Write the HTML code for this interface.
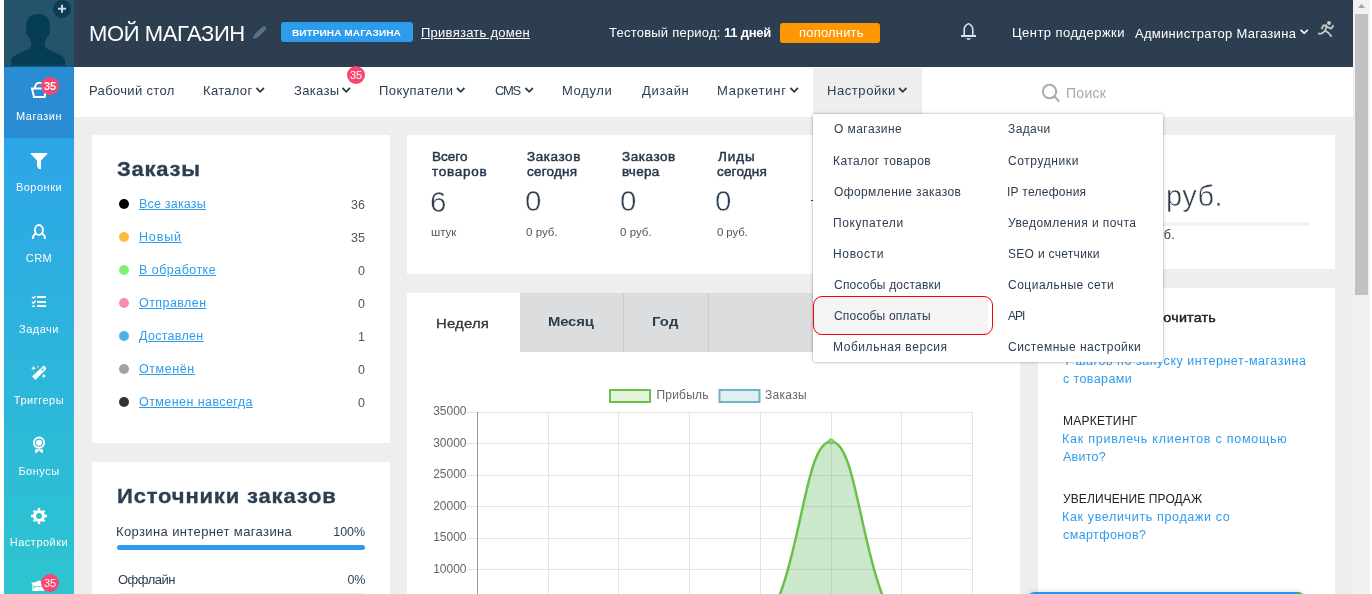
<!DOCTYPE html>
<html lang="ru">
<head>
<meta charset="utf-8">
<title>Мой магазин</title>
<style>
*{box-sizing:border-box;margin:0;padding:0}
html,body{width:1372px;height:594px;overflow:hidden;background:#fff}
body{font-family:"Liberation Sans",sans-serif;color:#2d3e50;font-size:14px;position:relative}
a{color:#2d9cec}
.a{position:absolute;white-space:nowrap;line-height:1}
#bg{position:absolute;left:4px;top:0;width:1349px;height:594px;background:#eeeeee}
#side{position:absolute;left:4px;top:0;width:70px;height:594px;background:linear-gradient(#2d9cee,#2dc5d0)}
#avatar{position:absolute;left:4px;top:0;width:70px;height:67px;background:#25536c;overflow:hidden}
.sl{position:absolute;left:4px;width:70px;text-align:center;color:#fff;font-size:11px;line-height:14px;letter-spacing:.5px}
.badge{position:absolute;background:#f9456f;color:#fff;border-radius:50%;text-align:center;font-size:11px;width:18px;height:18px;line-height:18px}
#hdr{position:absolute;left:74px;top:0;width:1279px;height:67px;background:#2d3e50}
#nav{position:absolute;left:74px;top:67px;width:1279px;height:50px;background:#fff}
.n{position:absolute;top:83px;font-size:13px;line-height:15px;color:#2d3e50;white-space:nowrap;letter-spacing:.2px}
.card{position:absolute;background:#fff}
.h{color:#fff}

.dot{position:absolute;left:119px;width:10px;height:10px;border-radius:50%}
.lk{left:139px;font-size:12.5px;line-height:16px;letter-spacing:.3px;text-decoration:underline;color:#2d9cec}
.num{left:320px;width:45px;text-align:right;font-size:12.5px;line-height:16px;color:#555;letter-spacing:0}
.st{font-size:12.5px;line-height:15px;font-weight:400;letter-spacing:.1px;color:#26374a;-webkit-text-stroke:.45px #26374a;transform:scaleX(1.08);transform-origin:0 0}
.big{top:185px;font-size:29.5px;line-height:32px;letter-spacing:0;-webkit-text-stroke:.5px #fff}
.sub{top:225px;font-size:11.5px;line-height:14px;color:#555;letter-spacing:-.3px}
.tab{font-size:13.5px;line-height:18px;color:#2d3e50;letter-spacing:-.2px;transform:scaleX(1.1);transform-origin:0 0}
.cat{left:1063px;font-size:12px;line-height:14px;color:#222;letter-spacing:0}
.rl{left:1063px;font-size:12.5px;line-height:18px;color:#2d9cec;letter-spacing:.4px;text-decoration:none}
.di{font-size:12px;line-height:15px;color:#2d3e50;letter-spacing:.4px}
</style>
</head>
<body>
<div id="wrap" style="position:absolute;left:0;top:0;width:1372px;height:594px;overflow:hidden;will-change:transform">
<div id="bg"></div>
<div id="side"></div>
<div id="avatar"></div>
<div class="a" id="sact" style="left:4px;top:67px;width:70px;height:71px;background:#2a8dd4"></div>
<div id="hdr"></div>
<div id="nav"></div>

<!-- HEADER -->
<div class="a h" id="t_title" style="left:89px;top:22px;font-size:22px;line-height:24px;letter-spacing:-0.4px">МОЙ МАГАЗИН</div>
<div class="a" id="b_vit" style="left:281px;top:22px;width:132px;height:20px;background:#2d9cec;border-radius:3px"></div>
<div class="a h" id="t_vit" style="left:292px;top:27px;font-size:9px;line-height:13px;transform:scaleX(1.12);transform-origin:0 0;font-weight:700;letter-spacing:0.04px">ВИТРИНА МАГАЗИНА</div>
<div class="a h" id="t_dom" style="left:421px;top:25px;font-size:13px;line-height:16px;letter-spacing:0.26px;text-decoration:underline">Привязать домен</div>
<div class="a h" id="t_test" style="left:609px;top:25px;font-size:13px;line-height:16px;letter-spacing:-.3px"><span style="letter-spacing:0.23px">Тестовый период:</span> <b style="letter-spacing:-0.23px">11 дней</b></div>
<div class="a" id="b_pop" style="left:780px;top:23px;width:100px;height:20px;background:#ff9800;border-radius:3px"></div>
<div class="a h" id="t_pop" style="left:799px;top:25px;font-size:13px;line-height:16px;letter-spacing:0.19px">пополнить</div>
<div class="a h" id="t_sup" style="left:1012px;top:25px;font-size:13px;line-height:16px;letter-spacing:0.46px">Центр поддержки</div>
<div class="a h" id="t_adm" style="left:1135px;top:26px;font-size:13px;line-height:16px;letter-spacing:0.29px">Администратор Магазина</div>

<!-- NAV -->
<div class="a" id="navact" style="left:813px;top:68px;width:109px;height:49px;background:#eeeeee"></div>
<div class="n" id="n1" style="left:89px;letter-spacing:0.34px">Рабочий стол</div>
<div class="n" id="n2" style="left:203px;letter-spacing:0.31px">Каталог</div>
<div class="n" id="n3" style="left:294px;letter-spacing:0.34px">Заказы</div>
<div class="n" id="n4" style="left:379px;letter-spacing:0.42px">Покупатели</div>
<div class="n" id="n5" style="left:495px;letter-spacing:-1.35px">CMS</div>
<div class="n" id="n6" style="left:562px;letter-spacing:0.64px">Модули</div>
<div class="n" id="n7" style="left:642px;letter-spacing:0.6px">Дизайн</div>
<div class="n" id="n8" style="left:717px;letter-spacing:0.71px">Маркетинг</div>
<div class="n" id="n9" style="left:827px;letter-spacing:0.57px">Настройки</div>
<div class="badge" id="nbadge" style="left:347px;top:66px">35</div>
<div class="a" id="t_search" style="left:1066px;top:84px;font-size:14px;line-height:18px;color:#a9a9a9;letter-spacing:0.3px">Поиск</div>

<!-- ICONS -->
<svg class="a" style="left:4px;top:0" width="70" height="67" viewBox="0 0 70 67">
  <rect x="0" y="65.3" width="70" height="1.7" fill="#0f5876"/>
  <path d="M22.5 30 C21 20 25 14 34 14 C43 14 47 20 45.5 30 C47 32 45 36 43 37 C42 41 40.5 43 40.5 45 C40.5 48 44 49.5 50 52 C57 55 61 57 61 62 L61 65.5 L7 65.5 L7 62 C7 57 11 55 18 52 C24 49.5 27.5 48 27.5 45 C27.5 43 26 41 25 37 C23 36 21 32 22.5 30 Z" fill="#043d55"/>
  <circle cx="58" cy="8.8" r="9" fill="#0d3c54"/>
  <path d="M58 4.8 V12.8 M54 8.8 H62" stroke="#c9d6dd" stroke-width="2" fill="none"/>
</svg>
<svg class="a" style="left:4px;top:67px" width="70" height="527" viewBox="4 67 70 527" fill="none" stroke="#fff">
  <!-- basket -->
  <path d="M32 88.5 L46.5 88.5 L44.6 97 L34 97 Z" stroke-width="2" stroke-linejoin="miter"/>
  <path d="M34.8 89 C34.8 80.5 44 80.5 44 89" stroke-width="2"/>
  <!-- funnel -->
  <path d="M30.7 153 H47.3 V154 L41 160.5 V169 H39 L37 166.5 V160.5 L30.7 154 Z" fill="#fff" stroke="none"/>
  <!-- user -->
  <ellipse cx="38.9" cy="230" rx="4" ry="4.9" stroke-width="2"/>
  <path d="M32.7 238.8 C33 236 34.5 234 36.4 233.6 M45.1 238.8 C44.8 236 43.3 234 41.4 233.6" stroke-width="2"/>
  <!-- tasks -->
  <g stroke="none" fill="#fff">
    <rect x="37" y="296" width="9" height="2"/>
    <rect x="37" y="301" width="9" height="2"/>
    <rect x="37" y="305" width="9" height="2"/>
    <rect x="32" y="305.5" width="3" height="1.5"/>
  </g>
  <path d="M32 297 L33.3 298.2 L35.8 296 M32 301.8 L33.3 303.3 L35.8 300.5" stroke-width="1.3"/>
  <!-- wand -->
  <g stroke="none" fill="#fff">
    <path d="M32 376.5 L43.2 366 Q44.2 365.4 45 366.2 L46 368 Q46.4 369 45.6 369.8 L35.3 380 Z"/>
    <path d="M33.5 365.8 L34.2 367.5 L35.9 368.2 L34.2 368.9 L33.5 370.6 L32.8 368.9 L31.1 368.2 L32.8 367.5 Z"/>
    <path d="M43.8 373.6 L44.5 375.3 L46.2 376 L44.5 376.7 L43.8 378.4 L43.1 376.7 L41.4 376 L43.1 375.3 Z"/>
    <rect x="37.2" y="366.2" width="1.2" height="1.2" transform="rotate(45 37.8 366.8)"/>
  </g>
  <ellipse cx="42.6" cy="369.4" rx="1.3" ry="0.9" transform="rotate(-45 42.6 369.4)" fill="#2fb6dc" stroke="none"/>
  <!-- medal -->
  <circle cx="39" cy="442.7" r="5.1" stroke-width="2"/>
  <circle cx="39" cy="442.7" r="3" fill="#fff" stroke="none"/>
  <path d="M35 449.3 H43 V452.8 H41.5 L39 450.6 L36.5 452.8 H35 Z" fill="#fff" stroke="none"/>
  <!-- gear -->
  <g transform="translate(39 516)">
    <circle r="4.5" stroke-width="3.2"/>
    <g stroke-width="2.4">
      <path d="M0 -5.5 V-8 M0 5.5 V8 M-5.5 0 H-8 M5.5 0 H8"/>
      <path d="M0 -5.5 V-7.6 M0 5.5 V7.6 M-5.5 0 H-7.6 M5.5 0 H7.6" transform="rotate(45)"/>
    </g>
  </g>
  <!-- last icon -->
  <path d="M31 582.5 H34 L37 581.5 L39.5 580.5 L41 581.5 H44 V591 H32.3 V584 Z" fill="#fff" stroke="none"/>
  <path d="M35.5 586.6 H44" stroke="#2dc3d2" stroke-width="1" stroke-dasharray="2 1"/>
  <path d="M33.2 585.5 L34.6 587 L33.4 588.5" stroke="#2dc3d2" stroke-width="1"/>
</svg>
<svg class="a" style="left:74px;top:0" width="1279" height="117" viewBox="74 0 1279 117" fill="none">
  <!-- pencil -->
  <path d="M253 38.8 L254 35 L263 26.3 Q264 25.6 265 26.5 L266 27.7 Q266.5 28.6 265.8 29.4 L257 38 Z" fill="#5a7792"/>
  <path d="M256.3 35.9 L263.6 28.6" stroke="#3c5068" stroke-width=".9" stroke-dasharray="1 1"/>
  <path d="M254.2 35.6 L256.6 37.6" stroke="#3c5068" stroke-width=".8"/>
  <path d="M262.2 27.2 L265 30" stroke="#3c5068" stroke-width=".7"/>
  <!-- bell -->
  <path d="M961 36 H976" stroke="#dde3ea" stroke-width="2"/>
  <path d="M964.2 35 V29.5 C964.2 26.5 966 24.8 968.5 23.6 C971 24.8 972.8 26.5 972.8 29.5 V35" stroke="#dde3ea" stroke-width="1.6"/>
  <path d="M965.8 38.3 H971.2 Q968.5 41.6 965.8 38.3 Z" fill="#dde3ea"/>
  <!-- admin chevron -->
  <path d="M1300.5 29.8 L1304.2 33.2 L1307.9 29.8" stroke="#fff" stroke-width="1.6"/>
  <!-- runner -->
  <g stroke="#c9c9c9" stroke-width="1.8" stroke-linejoin="round">
    <circle cx="1329" cy="23" r="2" fill="#c9c9c9" stroke="none"/>
    <path d="M1326.8 25.6 L1325 31 M1327 25.5 H1323.2 L1321.6 29.2 M1326.8 26.6 L1331 28.6 L1333.6 25.2 M1325 31 L1321.6 33.6 H1318 M1325 30.5 L1328.6 33 L1331.6 36.6"/>
  </g>
  <!-- nav chevrons -->
  <g stroke="#2d3e50" stroke-width="1.8">
    <path d="M256.5 88 L260.2 91.8 L263.9 88"/>
    <path d="M342.5 88 L346.2 91.8 L349.9 88"/>
    <path d="M457 88 L460.7 91.8 L464.4 88"/>
    <path d="M525.5 88 L529.2 91.8 L532.9 88"/>
    <path d="M790.5 88 L794.2 91.8 L797.9 88"/>
    <path d="M899 88 L902.7 91.8 L906.4 88"/>
  </g>
  <!-- search -->
  <circle cx="1049.5" cy="91.5" r="6.7" stroke="#aaa" stroke-width="2"/>
  <path d="M1054.3 96.3 L1059.3 101.6" stroke="#aaa" stroke-width="2"/>
</svg>

<!-- SIDEBAR -->
<div class="sl" style="top:109px">Магазин</div>
<div class="sl" style="top:180px">Воронки</div>
<div class="sl" style="top:251px">CRM</div>
<div class="sl" style="top:322px">Задачи</div>
<div class="sl" style="top:393px">Триггеры</div>
<div class="sl" style="top:464px">Бонусы</div>
<div class="sl" style="top:535px">Настройки</div>
<div class="badge" style="left:41px;top:77px;font-weight:700">35</div>
<div class="badge" style="left:41px;top:574px">35</div>

<!-- LEFT CARD 1 -->
<div class="card" style="left:92px;top:135px;width:298px;height:308px"></div>
<div class="a" id="t_zak" style="left:117px;top:157px;font-size:20px;line-height:24px;font-weight:700;letter-spacing:0.7px;transform:scaleX(1.1);transform-origin:0 0;-webkit-text-stroke:.3px #2d3e50">Заказы</div>
<div class="dot" style="top:199px;background:#000"></div><a class="a lk" style="top:196px;letter-spacing:0.2px">Все заказы</a><div class="a num" style="top:197px">36</div>
<div class="dot" style="top:232px;background:#fdbb3c"></div><a class="a lk" style="top:229px;letter-spacing:0.84px">Новый</a><div class="a num" style="top:230px">35</div>
<div class="dot" style="top:265px;background:#7cf27a"></div><a class="a lk" style="top:262px;letter-spacing:0.47px">В обработке</a><div class="a num" style="top:263px">0</div>
<div class="dot" style="top:298px;background:#fb8db0"></div><a class="a lk" style="top:295px;letter-spacing:0.43px">Отправлен</a><div class="a num" style="top:296px">0</div>
<div class="dot" style="top:331px;background:#4db2ec"></div><a class="a lk" style="top:328px;letter-spacing:0.3px">Доставлен</a><div class="a num" style="top:329px">1</div>
<div class="dot" style="top:364px;background:#a3a3a3"></div><a class="a lk" style="top:361px;letter-spacing:0.58px">Отменён</a><div class="a num" style="top:362px">0</div>
<div class="dot" style="top:397px;background:#333"></div><a class="a lk" style="top:394px;letter-spacing:0.43px">Отменен навсегда</a><div class="a num" style="top:395px">0</div>

<!-- LEFT CARD 2 -->
<div class="card" style="left:92px;top:462px;width:298px;height:140px"></div>
<div class="a" id="t_src" style="left:117px;top:484px;font-size:20px;line-height:24px;font-weight:700;letter-spacing:0.76px;transform:scaleX(1.1);transform-origin:0 0;-webkit-text-stroke:.3px #2d3e50">Источники заказов</div>
<div class="a" style="left:116px;top:524px;font-size:13px;line-height:16px;letter-spacing:0.38px">Корзина интернет магазина</div>
<div class="a" style="left:300px;width:65px;text-align:right;top:524px;font-size:12.5px;line-height:16px;letter-spacing:-0.07px">100%</div>
<div class="a" style="left:117px;top:545px;width:248px;height:5px;border-radius:3px;background:#2d9cec"></div>
<div class="a" style="left:118px;top:572px;font-size:13px;line-height:16px;letter-spacing:-0.5px">Оффлайн</div>
<div class="a" style="left:300px;width:65px;text-align:right;top:572px;font-size:12.5px;line-height:16px;letter-spacing:-.3px">0%</div>
<div class="a" style="left:117px;top:593px;width:248px;height:5px;border-radius:3px;background:#ececec"></div>

<!-- STATS CARD -->
<div class="card" style="left:407px;top:135px;width:613px;height:139px"></div>
<div class="a st" style="left:432px;top:150px;letter-spacing:-0.0px">Всего</div><div class="a st" style="left:432px;top:165px;letter-spacing:0.68px">товаров</div>
<div class="a st" style="left:527px;top:150px;letter-spacing:0.53px">Заказов</div><div class="a st" style="left:527px;top:165px;letter-spacing:0.2px">сегодня</div>
<div class="a st" style="left:622px;top:150px;letter-spacing:0.51px">Заказов</div><div class="a st" style="left:622px;top:165px;letter-spacing:0.25px">вчера</div>
<div class="a st" style="left:718px;top:150px;letter-spacing:0.81px">Лиды</div><div class="a st" style="left:717px;top:165px;letter-spacing:0.16px">сегодня</div>
<div class="a big" style="top:186px;left:430px">6</div>
<div class="a big" style="left:525px">0</div>
<div class="a big" style="left:620px">0</div>
<div class="a big" style="left:715px">0</div>
<div class="a sub" style="left:431px;letter-spacing:-0.0px">штук</div>
<div class="a sub" style="left:526px;letter-spacing:0.02px">0 руб.</div>
<div class="a sub" style="left:620px;letter-spacing:0.02px">0 руб.</div>
<div class="a sub" style="left:717px;letter-spacing:-0.14px">0 руб.</div>
<div class="a" style="left:811px;top:200px;width:2px;height:1px;background:#2d3e50"></div>

<!-- CHART CARD -->
<div class="card" style="left:407px;top:293px;width:613px;height:310px"></div>
<div class="a" style="left:520px;top:293px;width:500px;height:59px;background:#dcdddf"></div>
<div class="a" style="left:623px;top:293px;width:1px;height:59px;background:#cbccce"></div>
<div class="a" style="left:708px;top:293px;width:1px;height:59px;background:#cbccce"></div>
<div class="a tab" style="left:436px;top:315px;font-weight:400;color:#333;-webkit-text-stroke:.3px #333;letter-spacing:0.2px">Неделя</div>
<div class="a tab" style="left:548px;top:313px;font-weight:700;letter-spacing:-0.16px">Месяц</div>
<div class="a tab" style="left:652px;top:313px;font-weight:700;letter-spacing:0.15px">Год</div>
<svg class="a" style="left:407px;top:352px" width="613" height="242" viewBox="407 352 613 242">
  <g stroke="#e3e3e3" stroke-width="1" shape-rendering="crispEdges">
    <line x1="467" x2="972.5" y1="412.5" y2="412.5"/>
    <line x1="467" x2="972.5" y1="443.5" y2="443.5"/>
    <line x1="467" x2="972.5" y1="475.5" y2="475.5"/>
    <line x1="467" x2="972.5" y1="506.5" y2="506.5"/>
    <line x1="467" x2="972.5" y1="538.5" y2="538.5"/>
    <line x1="467" x2="972.5" y1="569.5" y2="569.5"/>
    <line x1="548.5" x2="548.5" y1="412" y2="594"/>
    <line x1="618.5" x2="618.5" y1="412" y2="594"/>
    <line x1="689.5" x2="689.5" y1="412" y2="594"/>
    <line x1="760.5" x2="760.5" y1="412" y2="594"/>
    <line x1="831.5" x2="831.5" y1="412" y2="594"/>
    <line x1="901.5" x2="901.5" y1="412" y2="594"/>
    <line x1="972.5" x2="972.5" y1="412" y2="594"/>
  </g>
  <line x1="477.5" x2="477.5" y1="412" y2="594" stroke="#9a9a9a" stroke-width="1" shape-rendering="crispEdges"/>
  <path d="M760.3 633.2 C802.3 576.2 802.7 441.4 831 441.4 C859.3 441.4 859.7 576.2 901.7 633.2 Z" fill="rgba(100,185,95,.33)"/>
  <path d="M760.3 633.2 C802.3 576.2 802.7 441.4 831 441.4 C859.3 441.4 859.7 576.2 901.7 633.2" fill="none" stroke="#6cc04a" stroke-width="2.5"/>
  <circle cx="831" cy="441.4" r="2.5" fill="#8fd46f" stroke="#6cc04a" stroke-width="1"/>
  <rect x="610" y="390" width="40" height="12" fill="#e1f3d9" stroke="#6cc04a" stroke-width="2"/>
  <rect x="719.5" y="390" width="40" height="12" fill="#e0f0f2" stroke="#6fb3c4" stroke-width="2"/>
  <g font-family="Liberation Sans, sans-serif" font-size="12" fill="#666">
    <text x="656.5" y="399" letter-spacing=".2">Прибыль</text>
    <text x="765" y="399" letter-spacing=".3">Заказы</text>
    <g text-anchor="end">
      <text x="466.5" y="415">35000</text>
      <text x="466.5" y="447">30000</text>
      <text x="466.5" y="478">25000</text>
      <text x="466.5" y="510">20000</text>
      <text x="466.5" y="541">15000</text>
      <text x="466.5" y="573">10000</text>
    </g>
  </g>
</svg>

<!-- RIGHT CARD 1 -->
<div class="card" style="left:1038px;top:135px;width:297px;height:134px"></div>
<div class="a" style="left:1120px;top:178px;font-size:30px;line-height:36px">0</div><div class="a" id="rub" style="left:1166px;top:178px;font-size:29px;line-height:36px;letter-spacing:.4px;-webkit-text-stroke:.5px #fff">руб.</div>
<div class="a" style="left:1063px;top:222px;width:247px;height:4px;background:#f3f3f3"></div>
<div class="a" style="left:1075px;width:100px;text-align:right;top:227px;font-size:12.5px;line-height:16px;letter-spacing:.3px">0 руб.</div>

<!-- RIGHT CARD 2 -->
<div class="card" style="left:1038px;top:288px;width:297px;height:320px"></div>
<div class="a" style="left:1016px;width:200px;text-align:right;top:310px;font-size:13px;line-height:16px;font-weight:400;color:#222;letter-spacing:.2px;-webkit-text-stroke:.45px #222;transform:scaleX(1.1);transform-origin:100% 0">Что почитать</div>
<div class="a cat" style="top:334px">С ЧЕГО НАЧАТЬ</div>
<a class="a rl" style="top:352px;left:1064px;letter-spacing:.54px">7 шагов по запуску интернет-магазина</a><a class="a rl" style="top:370px">с товарами</a>
<div class="a cat" style="top:414px;letter-spacing:0.25px">МАРКЕТИНГ</div>
<a class="a rl" style="top:430px;left:1062px;letter-spacing:0.75px">Как привлечь клиентов с помощью</a><a class="a rl" style="top:448px;letter-spacing:0.26px">Авито?</a>
<div class="a cat" style="top:492px;letter-spacing:0.1px">УВЕЛИЧЕНИЕ ПРОДАЖ</div>
<a class="a rl" style="top:508px;left:1062px;letter-spacing:0.65px">Как увеличить продажи со</a><a class="a rl" style="top:526px;letter-spacing:0.41px">смартфонов?</a>
<div class="a" style="left:1026px;top:592px;width:280px;height:20px;border-radius:9px;background:#2196f3;box-shadow:0 0 6px rgba(0,0,0,.15)"></div>
<div class="a" style="left:1296px;top:592px;width:10px;height:10px;border-radius:0 9px 0 0;background:#2db84b"></div>

<!-- DROPDOWN -->
<div class="a" id="dd" style="left:813px;top:114px;width:350px;height:248px;background:#fff;border-radius:0 0 3px 3px;box-shadow:0 0 3px rgba(40,50,75,.5)"></div>
<div class="a" style="left:813px;top:296px;width:175px;height:39px;background:#f4f4f4;border-radius:8px 0 0 8px"></div>
<div class="a" style="left:813px;top:296px;width:180px;height:39px;border:1px solid #f00;border-radius:9px"></div>
<div class="a di" style="left:834px;top:122px;letter-spacing:0.44px">О магазине</div>
<div class="a di" style="left:833px;top:154px;letter-spacing:0.43px">Каталог товаров</div>
<div class="a di" style="left:834px;top:185px;letter-spacing:0.38px">Оформление заказов</div>
<div class="a di" style="left:833px;top:216px;letter-spacing:0.58px">Покупатели</div>
<div class="a di" style="left:833px;top:247px;letter-spacing:0.67px">Новости</div>
<div class="a di" style="left:834px;top:278px;letter-spacing:0.21px">Способы доставки</div>
<div class="a di" style="left:834px;top:309px;letter-spacing:0.18px">Способы оплаты</div>
<div class="a di" style="left:833px;top:340px;letter-spacing:0.56px">Мобильная версия</div>
<div class="a di" style="left:1008px;top:122px;letter-spacing:0.4px">Задачи</div>
<div class="a di" style="left:1008px;top:154px;letter-spacing:0.6px">Сотрудники</div>
<div class="a di" style="left:1007px;top:185px;letter-spacing:0.27px">IP телефония</div>
<div class="a di" style="left:1008px;top:216px;letter-spacing:0.46px">Уведомления и почта</div>
<div class="a di" style="left:1008px;top:247px;letter-spacing:0.3px">SEO и счетчики</div>
<div class="a di" style="left:1008px;top:278px;letter-spacing:0.5px">Социальные сети</div>
<div class="a di" style="left:1008px;top:309px;letter-spacing:-0.95px">API</div>
<div class="a di" style="left:1008px;top:340px;letter-spacing:0.5px">Системные настройки</div>

<!-- SCROLLBAR -->
<div class="a" style="left:1353px;top:0;width:17px;height:594px;background:#f1f1f1"></div>
<div class="a" style="left:1355px;top:14px;width:13px;height:281px;background:#c1c1c1"></div>
<svg class="a" style="left:1353px;top:0" width="17" height="14" viewBox="0 0 17 14"><path d="M5 8 L8.5 4 L12 8 Z" fill="#a3a3a3"/></svg>

</div>
</body>
</html>
